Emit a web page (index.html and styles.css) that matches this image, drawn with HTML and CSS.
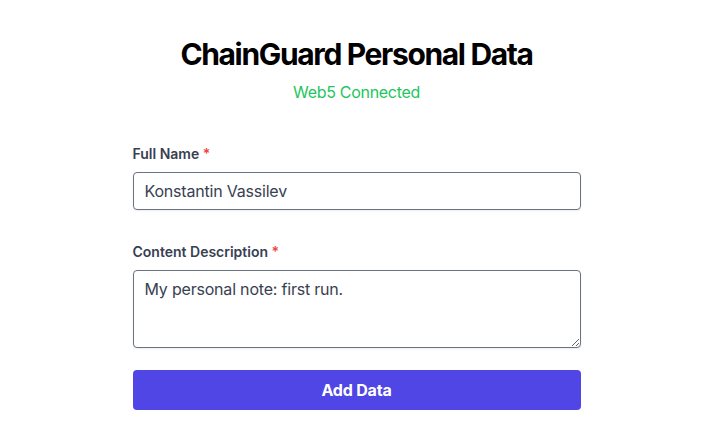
FILE: index.html
```html
<!DOCTYPE html>
<html lang="en">
<head>
<meta charset="utf-8">
<title>ChainGuard Personal Data</title>
<link rel="stylesheet" href="styles.css">
</head>
<body>
<main class="page">
  <div class="card">
    <header class="header">
      <h1 class="title">ChainGuard Personal Data</h1>
      <p class="status">Web5 Connected</p>
    </header>
    <form class="form">
      <div class="group">
        <label class="label" for="name">Full Name <span class="req">*</span></label>
        <input class="input" id="name" type="text" value="Konstantin Vassilev">
      </div>
      <div class="group group-text">
        <label class="label" for="desc">Content Description <span class="req">*</span></label>
        <textarea class="textarea" id="desc">My personal note: first run.</textarea>
      </div>
      <button class="button" type="button">Add Data</button>
    </form>
  </div>
</main>
</body>
</html>
```

FILE: styles.css
```css
* { box-sizing: border-box; }
html, body { margin: 0; padding: 0; background: #ffffff; }
body {
  font-family: Inter, "Noto Sans", sans-serif;
  color: #374151;
}
.page {
  display: flex;
  justify-content: center;
  padding: 36px 0 0 12px;
}
.card {
  width: 448px;
  display: flex;
  flex-direction: column;
}
.header {
  display: flex;
  flex-direction: column;
  align-items: center;
}
.title {
  margin: 0;
  font-size: 30px;
  line-height: 36px;
  font-weight: 700;
  color: #000000;
  letter-spacing: -1.35px;
}
.status {
  margin: 8px 0 0;
  font-size: 16px;
  line-height: 24px;
  color: #22c55e;
  letter-spacing: -0.3px;
}
.form {
  display: flex;
  flex-direction: column;
  margin-top: 40px;
}
.group {
  display: flex;
  flex-direction: column;
  gap: 8px;
}
.group-text { margin-top: 32px; gap: 8px; }
.label {
  font-size: 14px;
  line-height: 20px;
  font-weight: 600;
  color: #374151;
}
.req { color: #ef4444; }
.input, .textarea {
  font-family: Inter, "Noto Sans", sans-serif;
  font-size: 16px;
  line-height: 20px;
  letter-spacing: -0.2px;
  color: #374151;
  border: 1px solid #6b7280;
  border-radius: 4px;
  padding: 8px 11px;
  background: #ffffff;
  box-shadow: 0 1px 2px rgba(0, 0, 0, 0.08);
  width: 100%;
  margin: 0;
}
.input { height: 38px; }
.textarea {
  height: 78px;
  display: block;
  resize: vertical;
}
.button {
  margin-top: 22px;
  height: 40px;
  border: none;
  border-radius: 4px;
  background: #4f46e5;
  color: #ffffff;
  font-family: Inter, "Noto Sans", sans-serif;
  font-size: 16px;
  font-weight: 700;
  letter-spacing: -0.2px;
  cursor: pointer;
}
```
